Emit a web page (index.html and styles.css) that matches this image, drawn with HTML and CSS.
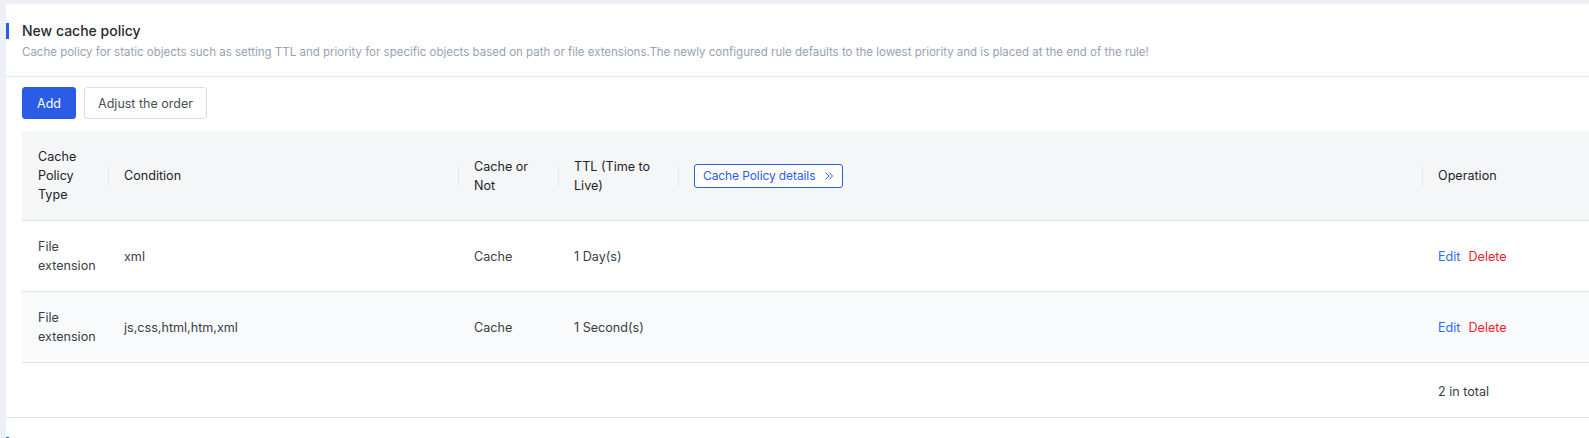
FILE: index.html
```html
<!DOCTYPE html>
<html>
<head>
	<title>Cache policy</title>
	<link rel="stylesheet" href="styles.css">
</head>
<body>
	<main class="panel">
		<section class="policy">
			<header class="section-head">
				<h2 class="section-title">New cache policy</h2>
				<p class="section-desc">Cache policy for static objects such as setting TTL and priority for specific objects based on path or file extensions.The newly configured rule defaults to the lowest priority and is placed at the end of the rule!</p>
			</header>

			<div class="toolbar">
				<button class="btn btn-primary">Add</button>
				<button class="btn btn-default">Adjust the order</button>
			</div>

			<div class="table-wrap">
				<table class="rules">
					<colgroup>
						<col class="col-type">
						<col class="col-cond">
						<col class="col-cache">
						<col class="col-ttl">
						<col class="col-detail">
						<col class="col-op">
					</colgroup>
					<thead>
						<tr>
							<th>Cache Policy Type</th>
							<th class="sep">Condition</th>
							<th class="sep">Cache or Not</th>
							<th class="sep">TTL (Time to Live)</th>
							<th class="sep">
								<button class="btn-detail">
									<span>Cache Policy details</span>
									<svg width="10" height="10" viewBox="0 0 10 10" fill="none" stroke="currentColor" stroke-width="1">
										<path d="M1.5 1.5 L5 5 L1.5 8.5"/>
										<path d="M5 1.5 L8.5 5 L5 8.5"/>
									</svg>
								</button>
							</th>
							<th class="sep">Operation</th>
						</tr>
					</thead>
					<tbody>
						<tr>
							<td>File extension</td>
							<td>xml</td>
							<td>Cache</td>
							<td>1 Day(s)</td>
							<td></td>
							<td><a class="link">Edit</a><a class="link link-danger">Delete</a></td>
						</tr>
						<tr class="striped">
							<td>File extension</td>
							<td>js,css,html,htm,xml</td>
							<td>Cache</td>
							<td>1 Second(s)</td>
							<td></td>
							<td><a class="link">Edit</a><a class="link link-danger">Delete</a></td>
						</tr>
					</tbody>
					<tfoot>
						<tr>
							<td colspan="5"></td>
							<td class="total">2 in total</td>
						</tr>
					</tfoot>
				</table>
			</div>
		</section>

		<section class="policy">
			<header class="section-head">
				<h2 class="section-title"></h2>
			</header>
		</section>
	</main>
</body>
</html>
```

FILE: styles.css
```css
/* General styles */
body {
	margin: 0;
	padding: 4px 0 0 6px;
	background-color: #edf1f5;
	font-family: Inter, "Noto Sans", sans-serif;
	color: #1f2329;
	overflow: hidden;
}

.panel {
	background-color: #fff;
	min-height: 500px;
}

/* Section header with the blue marker */
.section-head {
	padding-top: 19px;
	padding-bottom: 15px;
	border-bottom: 1px solid #dfe3ea;
}

.section-title {
	margin: 0;
	height: 16px;
	border-left: 3px solid #2b5ce6;
	padding-left: 13px;
	font-size: 14px;
	font-weight: 500;
	line-height: 16px;
	color: #272b33;
}

.section-desc {
	margin: 4px 0 0 16px;
	font-size: 11.5px;
	line-height: 18px;
	color: #98a2b4;
}

/* Buttons */
.toolbar {
	display: flex;
	gap: 8px;
	padding: 10px 16px 12px;
}

.btn {
	height: 32px;
	padding: 0;
	border-radius: 3px;
	font-family: inherit;
	font-size: 12.5px;
	white-space: nowrap;
	cursor: pointer;
}

.btn-primary {
	width: 54px;
	background-color: #2b5ce6;
	border: 1px solid #2b5ce6;
	color: #fff;
}

.btn-default {
	width: 123px;
	background-color: #fff;
	border: 1px solid #d9dde5;
	color: #4a4f58;
}

/* Table */
.table-wrap {
	padding-left: 16px;
	border-bottom: 1px solid #dfe3ea;
}

.rules {
	width: 100%;
	border-collapse: collapse;
	table-layout: fixed;
	font-size: 12.6px;
	line-height: 19px;
}

.col-type { width: 86px; }
.col-cond { width: 350px; }
.col-cache { width: 100px; }
.col-ttl { width: 120px; }
.col-detail { width: 744px; }

.rules th {
	position: relative;
	height: 57px;
	padding: 16px;
	background-color: #f5f6f8;
	border-bottom: 1px solid #dfe3ea;
	text-align: left;
	font-weight: 400;
	color: #1f2329;
}

/* short divider between header cells */
.rules th.sep::before {
	content: "";
	position: absolute;
	left: 0;
	top: 50%;
	height: 19px;
	margin-top: -10px;
	border-left: 1px solid #e3e6ec;
}

.rules td {
	height: 38px;
	padding: 16px;
	border-bottom: 1px solid #dfe3ea;
	color: #383d46;
	vertical-align: middle;
}

.rules tr.striped td {
	background-color: #f9fafc;
}

.rules tfoot td {
	height: 22px;
	border-bottom: none;
	padding-top: 17px;
	padding-bottom: 15px;
}

.btn-detail {
	display: inline-flex;
	align-items: center;
	justify-content: space-between;
	width: 149px;
	height: 24px;
	padding: 0 8px 0 8px;
	background-color: #fff;
	border: 1px solid #2b5ce6;
	border-radius: 3px;
	font-family: inherit;
	font-size: 12px;
	letter-spacing: -0.1px;
	color: #2b5ce6;
	cursor: pointer;
}

.link {
	margin-right: 8px;
	color: #2f68f0;
	cursor: pointer;
}

.link-danger {
	color: #f5222d;
}
```
